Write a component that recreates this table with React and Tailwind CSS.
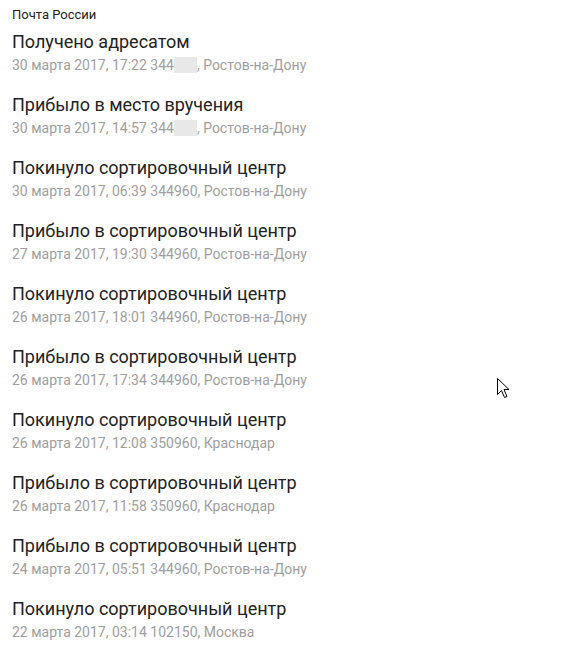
const events = [
  { title: 'Получено адресатом', date: '30 марта 2017, 17:22', index: '344', hidden: true, city: 'Ростов-на-Дону' },
  { title: 'Прибыло в место вручения', date: '30 марта 2017, 14:57', index: '344', hidden: true, city: 'Ростов-на-Дону' },
  { title: 'Покинуло сортировочный центр', date: '30 марта 2017, 06:39', index: '344960', city: 'Ростов-на-Дону' },
  { title: 'Прибыло в сортировочный центр', date: '27 марта 2017, 19:30', index: '344960', city: 'Ростов-на-Дону' },
  { title: 'Покинуло сортировочный центр', date: '26 марта 2017, 18:01', index: '344960', city: 'Ростов-на-Дону' },
  { title: 'Прибыло в сортировочный центр', date: '26 марта 2017, 17:34', index: '344960', city: 'Ростов-на-Дону' },
  { title: 'Покинуло сортировочный центр', date: '26 марта 2017, 12:08', index: '350960', city: 'Краснодар' },
  { title: 'Прибыло в сортировочный центр', date: '26 марта 2017, 11:58', index: '350960', city: 'Краснодар' },
  { title: 'Прибыло в сортировочный центр', date: '24 марта 2017, 05:51', index: '344960', city: 'Ростов-на-Дону' },
  { title: 'Покинуло сортировочный центр', date: '22 марта 2017, 03:14', index: '102150', city: 'Москва' },
]

export default function App() {
  return (
    <div className="relative w-[584px] h-[646px] bg-white px-3 pt-[6px] font-['Roboto',sans-serif]">
      <div className="text-[13px] leading-[18px] text-[#222]">Почта России</div>
      <ul className="mt-[6px] flex flex-col gap-[17px]">
        {events.map((e, i) => (
          <li key={i}>
            <div className="text-[18px] leading-[24px] text-[#222]">{e.title}</div>
            <div className="text-[14px] leading-[22px] text-[#9e9e9e] flex items-center">
              <span className="whitespace-pre">{e.date} {e.index}</span>
              {e.hidden && <span className="inline-block w-[23px] h-[16px] bg-[#e8e8e8]" />}
              <span className="whitespace-pre">, {e.city}</span>
            </div>
          </li>
        ))}
      </ul>
      <svg className="absolute left-[497px] top-[378px]" width="13" height="21" viewBox="0 0 13 21">
        <path d="M0.5 0.5 L0.5 16.5 L4.5 12.5 L7.5 19.5 L10 18.5 L7 11.5 L12 11.5 Z" fill="#fff" stroke="#000" strokeWidth="1" />
      </svg>
    </div>
  )
}
